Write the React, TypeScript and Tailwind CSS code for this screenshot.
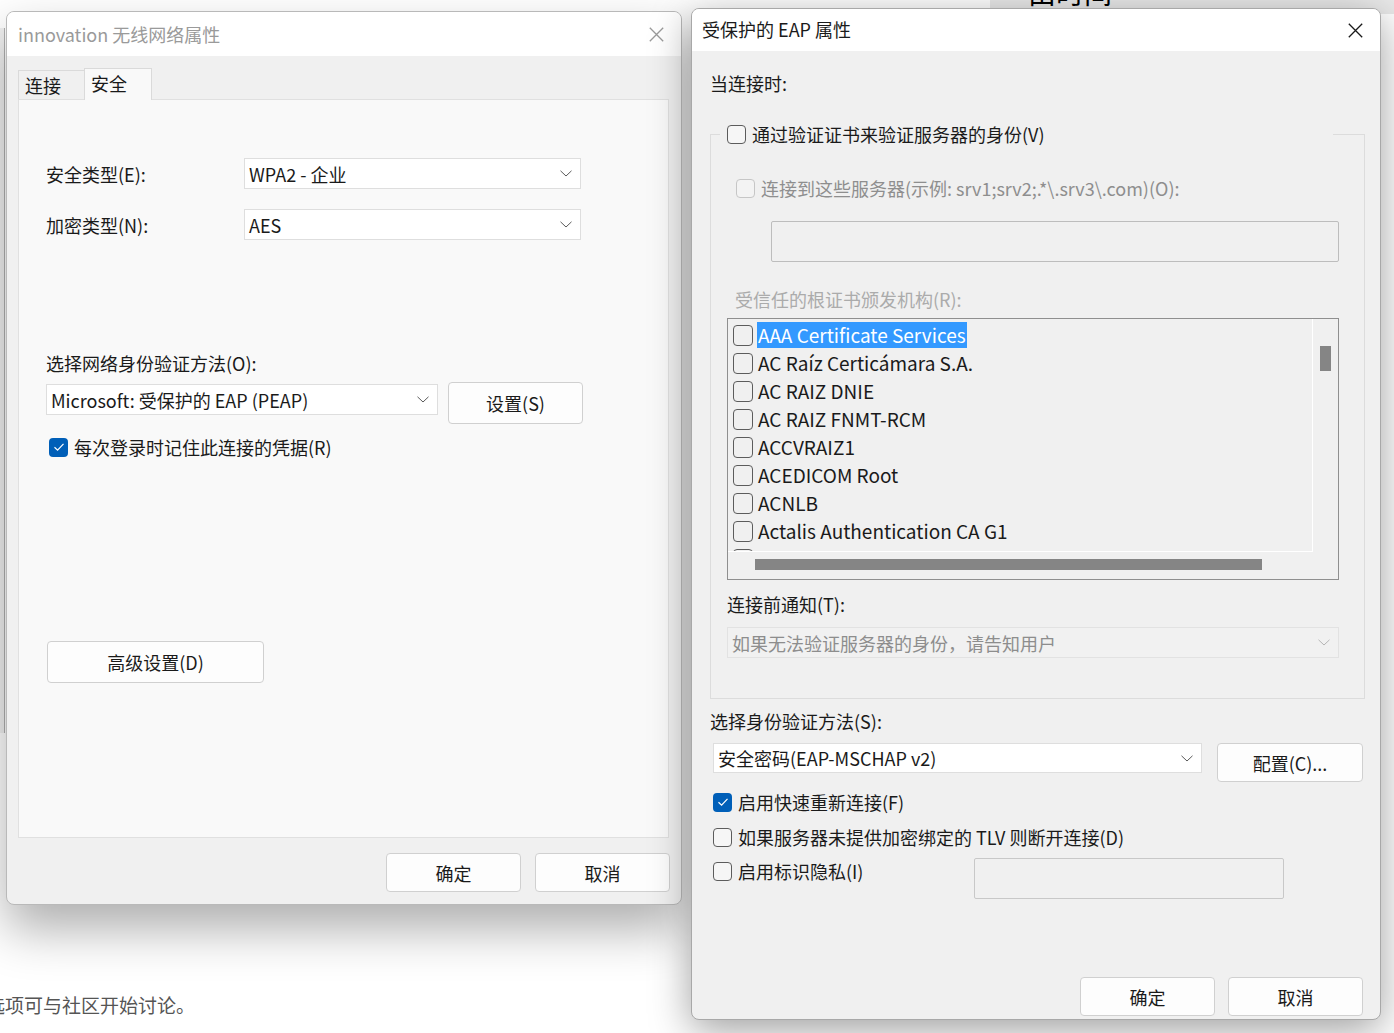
import type { ReactNode } from 'react';

function Chevron({ color = 'text-[#5a5a5a]' }: { color?: string }) {
  return (
    <svg width="12" height="7" viewBox="0 0 12 7" className={color}>
      <path d="M0.5 0.8 L6 6 L11.5 0.8" fill="none" stroke="currentColor" strokeWidth="1" />
    </svg>
  );
}

function CloseX({ color }: { color: string }) {
  return (
    <svg width="15" height="15" viewBox="0 0 15 15" className={color}>
      <path d="M0.8 0.8 L14.2 14.2 M14.2 0.8 L0.8 14.2" fill="none" stroke="currentColor" strokeWidth="1.3" />
    </svg>
  );
}

function Check({ checked = false, disabled = false }: { checked?: boolean; disabled?: boolean }) {
  if (checked) {
    return (
      <span className="flex h-[19px] w-[19px] shrink-0 items-center justify-center rounded-[4px] bg-[#005fb8]">
        <svg width="12" height="10" viewBox="0 0 12 10">
          <path d="M1.5 5.2 L4.6 8.2 L10.5 1.8" fill="none" stroke="white" strokeWidth="1.2" />
        </svg>
      </span>
    );
  }
  return (
    <span
      className={`h-[19px] w-[19px] shrink-0 rounded-[4px] border ${
        disabled ? 'border-[#c6c6c6] bg-[#f3f3f3]' : 'border-[#5c5c5c] bg-[#f6f6f6]'
      }`}
    />
  );
}

function Combo({ text, width, height = 'h-[31px]', muted = false }: { text: string; width: string; height?: string; muted?: boolean }) {
  return (
    <div
      className={`flex ${width} ${height} shrink-0 items-center justify-between border pl-[4px] pr-[8px] ${
        muted ? 'border-[#e2e2e2] bg-[#f1f1f1] text-[#8d8d8d]' : 'border-[#dedede] bg-white text-[#1a1a1a]'
      }`}
    >
      <span>{text}</span>
      <Chevron color={muted ? 'text-[#b5b5b5]' : 'text-[#5a5a5a]'} />
    </div>
  );
}

function Btn({ children, className = '' }: { children: ReactNode; className?: string }) {
  return (
    <div
      className={`flex shrink-0 items-center justify-center rounded-[4px] border border-[#d0d0d0] bg-[#fdfdfd] text-[#1a1a1a] ${className}`}
    >
      {children}
    </div>
  );
}

const certs = [
  'AAA Certificate Services',
  'AC Raíz Certicámara S.A.',
  'AC RAIZ DNIE',
  'AC RAIZ FNMT-RCM',
  'ACCVRAIZ1',
  'ACEDICOM Root',
  'ACNLB',
  'Actalis Authentication CA G1',
  'Actalis Authentication Root CA',
];

function WirelessDialog() {
  return (
    <div className="absolute left-[6px] top-[11px] flex h-[894px] w-[676px] flex-col overflow-hidden rounded-[8px] border border-[#b9b9b9] bg-[#f0f0f0] shadow-[0_24px_50px_rgba(0,0,0,0.32)]">
      <div className="flex h-[44px] shrink-0 items-center justify-between bg-white pl-[11px] pr-[17px] text-[18px] text-[#9a9a9a]">
        <span>innovation 无线网络属性</span>
        <CloseX color="text-[#9a9a9a]" />
      </div>

      <div className="ml-[11px] mt-[12px] flex items-end">
        <div className="flex h-[29px] w-[66px] items-center border-l border-t border-[#dadada] bg-[#f0f0f0] pl-[6px]">连接</div>
        <div className="relative z-10 -mb-px flex h-[32px] w-[68px] items-center border-x border-t border-[#dadada] bg-[#f9f9f9] pb-[3px] pl-[6px]">
          安全
        </div>
      </div>

      <div className="ml-[11px] flex h-[739px] w-[651px] flex-col border border-[#e0e0e0] bg-[#f9f9f9] pl-[27px]">
        <div className="mt-[58px] flex items-center">
          <span className="w-[198px]">安全类型(E):</span>
          <Combo text="WPA2 - 企业" width="w-[337px]" />
        </div>
        <div className="mt-[20px] flex items-center">
          <span className="w-[198px]">加密类型(N):</span>
          <Combo text="AES" width="w-[337px]" />
        </div>
        <div className="mt-[111px]">选择网络身份验证方法(O):</div>
        <div className="mt-[7px] flex items-start">
          <div className="mt-[2px]">
            <Combo text="Microsoft: 受保护的 EAP (PEAP)" width="w-[392px]" />
          </div>
          <Btn className="ml-[10px] h-[42px] w-[135px]">设置(S)</Btn>
        </div>
        <div className="ml-[3px] mt-[11px] flex items-center gap-[6px]">
          <Check checked />
          <span>每次登录时记住此连接的凭据(R)</span>
        </div>
        <Btn className="ml-[1px] mt-[182px] h-[42px] w-[217px]">高级设置(D)</Btn>
      </div>

      <div className="mt-[15px] flex justify-end gap-[14px] pr-[11px]">
        <Btn className="h-[39px] w-[135px]">确定</Btn>
        <Btn className="h-[39px] w-[135px]">取消</Btn>
      </div>
    </div>
  );
}

function EapDialog() {
  return (
    <div className="absolute left-[691px] top-[8px] flex h-[1012px] w-[690px] flex-col overflow-hidden rounded-[8px] border border-[#a8a8a8] bg-[#f0f0f0] text-[#1a1a1a] shadow-[0_10px_40px_rgba(0,0,0,0.38)]">
      <div className="flex h-[42px] shrink-0 items-center justify-between bg-white pl-[10px] pr-[17px] text-[18px]">
        <span className="-mt-[3px]">受保护的 EAP 属性</span>
        <CloseX color="text-[#1a1a1a]" />
      </div>

      <div className="flex flex-col pl-[18px]">
        <div className="mt-[20px]">当连接时:</div>

        <fieldset className="mt-[27px] w-[655px] border border-[#dcdcdc] pb-[40px]">
          <legend className="ml-[9px] flex w-[613px] items-center gap-[6px] bg-[#f0f0f0] pl-[7px]">
            <Check />
            <span>通过验证证书来验证服务器的身份(V)</span>
          </legend>

          <div className="ml-[25px] mt-[30px] flex items-center gap-[6px] text-[#8e8e8e]">
            <Check disabled />
            <span>连接到这些服务器(示例: srv1;srv2;.*\.srv3\.com)(O):</span>
          </div>
          <div className="ml-[60px] mt-[21px] h-[41px] w-[568px] rounded-[2px] border border-[#bdbdbd] bg-[#f0f0f0]" />

          <div className="ml-[24px] mt-[25px] text-[#ababab]">受信任的根证书颁发机构(R):</div>

          <div className="ml-[16px] mt-[7px] flex h-[262px] w-[612px] flex-col border border-[#8f8f8f] bg-[#f0f0f0]">
            <div className="flex h-[233px] shrink-0">
              <div className="flex h-[233px] w-[585px] flex-col overflow-hidden border-b border-r border-white pl-[5px] pt-[2px]">
                {certs.map((c, i) => (
                  <div key={c} className="flex h-[28px] shrink-0 items-center gap-[4px] text-[19px]">
                    <span className="h-[21px] w-[20px] shrink-0 rounded-[4px] border border-[#5c5c5c]" />
                    <span className={i === 0 ? 'bg-[#3399ff] px-[1px] leading-[26px] text-white' : 'px-[1px]'}>{c}</span>
                  </div>
                ))}
              </div>
              <div className="flex flex-1 justify-center pt-[27px]">
                <div className="h-[25px] w-[11px] bg-[#858585]" />
              </div>
            </div>
            <div className="ml-[27px] mt-[7px] h-[11px] w-[507px] bg-[#858585]" />
          </div>

          <div className="ml-[16px] mt-[12px]">连接前通知(T):</div>
          <div className="ml-[16px] mt-[11px]">
            <Combo text="如果无法验证服务器的身份，请告知用户" width="w-[612px]" muted />
          </div>
        </fieldset>

        <div className="mt-[10px]">选择身份验证方法(S):</div>
        <div className="mt-[10px] flex items-start">
          <div className="ml-[3px]">
            <Combo text="安全密码(EAP-MSCHAP v2)" width="w-[489px]" height="h-[30px]" />
          </div>
          <Btn className="ml-[15px] h-[39px] w-[146px]">配置(C)...</Btn>
        </div>

        <div className="ml-[3px] mt-[8px] flex items-center gap-[6px]">
          <Check checked />
          <span>启用快速重新连接(F)</span>
        </div>
        <div className="ml-[3px] mt-[11px] flex items-center gap-[6px]">
          <Check />
          <span>如果服务器未提供加密绑定的 TLV 则断开连接(D)</span>
        </div>
        <div className="ml-[3px] mt-[9px] flex items-start">
          <div className="mt-[1px] flex w-[261px] items-center gap-[6px]">
            <Check />
            <span>启用标识隐私(I)</span>
          </div>
          <div className="h-[41px] w-[310px] rounded-[2px] border border-[#c8c8c8] bg-[#f0f0f0]" />
        </div>

        <div className="mt-[78px] flex justify-end gap-[13px] pr-[17px]">
          <Btn className="h-[39px] w-[135px] border-[#0067c0] bg-[#fbfbfb]">确定</Btn>
          <Btn className="h-[39px] w-[135px]">取消</Btn>
        </div>
      </div>
    </div>
  );
}

export default function App() {
  return (
    <div className="relative h-[1033px] w-[1394px] overflow-hidden bg-white font-['Noto_Sans_CJK_SC',sans-serif] text-[18px] leading-[24px] text-[#1a1a1a]">
      {/* windows behind */}
      <div className="absolute left-0 top-[28px] h-[705px] w-[5px] border-r border-[#b0b0b0] bg-[#f2f2f2]" />
      <div className="absolute left-[990px] top-0 h-[14px] w-[404px] overflow-hidden bg-[#e9e9e9]">
        <div className="ml-[38px] mt-[-24px] text-[28px] leading-[32px] text-black">由时间</div>
      </div>
      <div className="absolute left-[-14px] top-[993px] text-[19px] text-[#555]">选项可与社区开始讨论。</div>

      <WirelessDialog />
      <EapDialog />
    </div>
  );
}
